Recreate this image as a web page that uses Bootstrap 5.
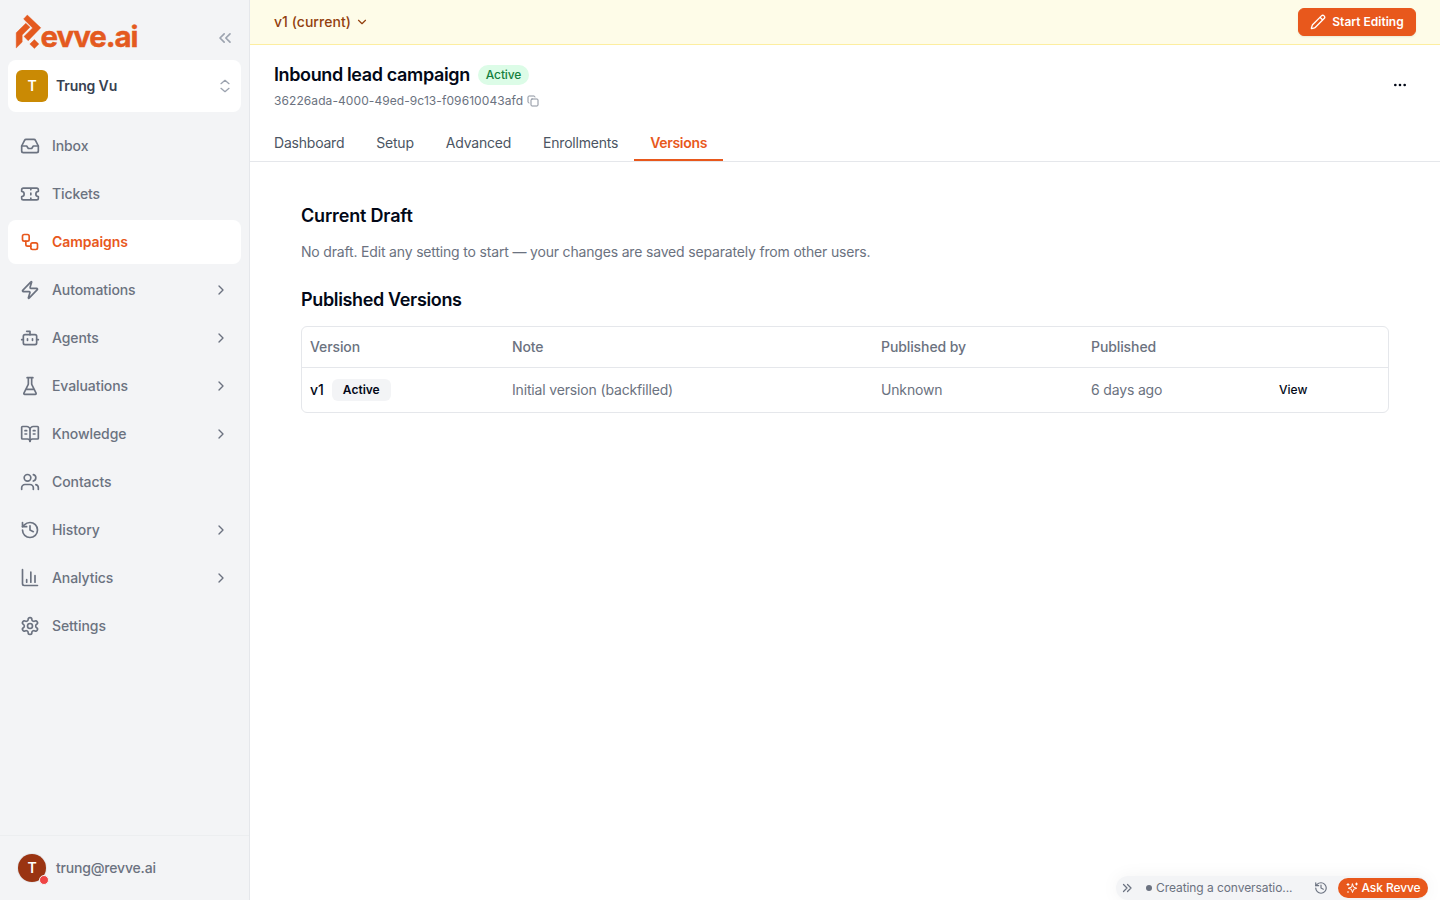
<!DOCTYPE html>
<html lang="en">
<head>
<meta charset="utf-8">
<meta name="viewport" content="width=device-width, initial-scale=1">
<title>Inbound lead campaign</title>
<link href="https://cdn.jsdelivr.net/npm/bootstrap@5.3.0/dist/css/bootstrap.min.css" rel="stylesheet">
<style>
body{font-family:Inter,"Liberation Sans",sans-serif;font-size:14px;line-height:20px;color:#020817;background:#fff;height:100vh;overflow:hidden}
svg{display:block;flex:none}
.ic{fill:none;stroke:currentColor;stroke-width:2;stroke-linecap:round;stroke-linejoin:round}
.side{width:250px;background:#f3f4f6;border-right:1px solid #e5e7eb;color:#6b7280}
.side-head{height:60px;padding:15px 14px 0 16px}
.brand{color:#e45a20;overflow:visible}
.brand path{stroke:currentColor;stroke-width:.4}
.collapse-btn{margin-top:13px;color:#9ca3af}
.team{height:52px;margin:0 8px;padding:0 8px;border-radius:8px;background:#fff;color:#374151;letter-spacing:-.14px}
.team-caret{color:#9ca3af}
.team-tile{width:32px;height:32px;border-radius:6px;background:#ca8a04;color:#fff}
.menu{padding:12px 8px 0;gap:4px}
.menu .nav-link{height:44px;padding:0 12px;border-radius:8px;color:#6b7280;font-weight:500;gap:12px;letter-spacing:-.09px}
.menu .nav-link.active{background:#fff;color:#e8581c;font-weight:600}
.side-foot{height:65px;border-top:1px solid #eceef0;padding:0 16px;gap:8px;letter-spacing:-.18px}
.mail,.version-pick{font-weight:500}
.version-pick{letter-spacing:.04px;gap:4px}
.avatar{width:32px;height:32px;padding:2px}
.avatar-face{width:28px;height:28px;background:#9a3412;color:#fff;box-shadow:0 0 0 1px #e5e7eb}
.status-dot{position:absolute;right:-1px;bottom:-1px;width:10px;height:10px;border:1px solid #f3f4f6;background:#ef4444}
.version-bar{height:45px;padding:0 24px;background:#fefce8;border-bottom:1px solid #fdeea0;color:#92400e}
.btn-edit{--bs-btn-color:#fff;--bs-btn-bg:#e8581c;--bs-btn-border-color:#e8581c;--bs-btn-hover-bg:#cf4a13;--bs-btn-hover-color:#fff;height:28px;width:118px;padding:0;font-size:12px;font-weight:600;border-radius:6px;gap:6px;box-shadow:0 1px 2px rgba(0,0,0,.08)}
.page-head{height:80px;padding:18px 24px 0}
.more-btn{margin-top:14px}
.page-title{font-size:18px;line-height:24px;letter-spacing:-.37px}
.pill-active{height:20px;padding:0 8px;background:#dcfce7;color:#15803d;font-size:12px;font-weight:500;line-height:20px;letter-spacing:-.13px}
.uuid{font-size:12px;line-height:16px;color:#6b7280;gap:4px;margin-top:6px;letter-spacing:.08px}
.soft{color:#8a919d}
.tabs{height:37px;border-bottom:1px solid #e5e7eb;padding-left:8px;letter-spacing:-.215px}
.tabs .nav-link{padding:8px 16px 6px;color:#4b5563;border-bottom:2px solid transparent;height:36px}
.tabs .nav-link.active{color:#e8581c;font-weight:600;border-color:#e8581c;letter-spacing:-.3px}
.content{padding:40px 51px 0}
.sect{font-size:18px;line-height:28px;font-weight:600;letter-spacing:-.35px;margin:0}
.sect.draft{letter-spacing:-.17px}
.muted{color:#6b7280;padding:12px 0 24px;letter-spacing:-.175px}
.frame{border:1px solid #e5e7eb;border-radius:6px;margin-top:12px}
.frame .table{--bs-table-bg:transparent;table-layout:fixed;margin:0}
.frame th,.frame td{padding:0 8px;vertical-align:middle;color:#6b7280;border-bottom:0}
.frame th{height:40px;font-weight:500;border-bottom:1px solid #e5e7eb;letter-spacing:-.1px}
.frame td{height:45px;letter-spacing:-.16px}
.frame td.ink{color:#020817;font-weight:500;letter-spacing:0}
.frame td.view-cell{font-size:12px}
.tag{height:22px;padding:0 11px;background:#f3f4f6;border-radius:6px;font-size:12px;font-weight:600;line-height:22px}
.dock{position:absolute;right:12px;bottom:0;width:312px;height:24px;padding-left:5px;background:#f3f4f6;border-radius:12px;color:#6b7280;font-size:12px;letter-spacing:-.07px;box-shadow:0 0 18px rgba(0,0,0,.05)}
.dock-more{stroke-width:2.5}
.dock-dot{width:6px;height:6px;background:#6b7280;margin:0 4px 0 13px}
.dock-history{margin:0 10px 0 auto}
.ask{height:20px;width:90px;background:#e8581c;color:#fff;font-weight:500;gap:4px;letter-spacing:-.1px}
</style>
</head>
<body class="d-flex">
<svg width="0" height="0" class="position-absolute"><defs>
<symbol id="right" viewBox="0 0 24 24"><path d="m9 18 6-6-6-6"/></symbol>
</defs></svg>

<aside class="side d-flex flex-column flex-shrink-0">
  <div class="side-head d-flex justify-content-between align-items-start">
    <svg class="brand" width="130" height="38" viewBox="0 0 130 38" fill="currentColor">
      <path d="M11.3 0 24.8 12.8 12.2 25.8 8 21.4 16.6 12.9 7.6 4z"/>
      <path d="M.2 33V17.8L9.8 8.2 14 12.2 6.2 20v7.1z"/>
      <path d="M13.8 29.1 18.4 24.6 22.9 29.1 18.4 33.5z"/>
      <text x="24.6" y="31.8" font-size="29.5" font-weight="700" stroke="currentColor" stroke-width=".4" textLength="98" lengthAdjust="spacing">evve.ai</text>
    </svg>
    <svg class="ic collapse-btn" width="20" height="20" viewBox="0 0 24 24"><path d="m11 17-5-5 5-5M18 17l-5-5 5-5"/></svg>
  </div>
  <div class="team d-flex align-items-center">
    <span class="team-tile d-flex align-items-center justify-content-center fw-semibold me-2">T</span>
    <span class="fw-semibold flex-grow-1">Trung Vu</span>
    <svg class="ic team-caret" width="16" height="16" viewBox="0 0 24 24"><path d="m6 15.500 6 5 6-5M6 8.500l6-5 6 5"/></svg>
  </div>
  <nav class="menu nav flex-column flex-nowrap flex-grow-1">
    <a href="#" class="nav-link d-flex align-items-center"><svg class="ic" width="20" height="20" viewBox="0 0 24 24"><path d="M22 12h-6l-2 3h-4l-2-3H2"/><path d="M5.45 5.11 2 12v6a2 2 0 0 0 2 2h16a2 2 0 0 0 2-2v-6l-3.45-6.89A2 2 0 0 0 16.76 4H7.24a2 2 0 0 0-1.79 1.11z"/></svg>Inbox</a>
    <a href="#" class="nav-link d-flex align-items-center"><svg class="ic" width="20" height="20" viewBox="0 0 24 24"><path d="M2 9a3 3 0 0 1 0 6v2a2 2 0 0 0 2 2h16a2 2 0 0 0 2-2v-2a3 3 0 0 1 0-6V7a2 2 0 0 0-2-2H4a2 2 0 0 0-2 2ZM13 5v2M13 17v2M13 11v2"/></svg>Tickets</a>
    <a href="#" class="nav-link active d-flex align-items-center"><svg class="ic" width="20" height="20" viewBox="0 0 24 24"><rect width="8" height="8" x="3" y="3" rx="2"/><path d="M7 11v4a2 2 0 0 0 2 2h4"/><rect width="8" height="8" x="13" y="13" rx="2"/></svg>Campaigns</a>
    <a href="#" class="nav-link d-flex align-items-center"><svg class="ic" width="20" height="20" viewBox="0 0 24 24"><path d="M4 14a1 1 0 0 1-.78-1.63l9.9-10.2a.5.5 0 0 1 .86.46l-1.92 6.02A1 1 0 0 0 13 10h7a1 1 0 0 1 .78 1.63l-9.9 10.2a.5.5 0 0 1-.86-.46l1.92-6.02A1 1 0 0 0 11 14z"/></svg>Automations<svg class="ic ms-auto" width="16" height="16"><use href="#right"/></svg></a>
    <a href="#" class="nav-link d-flex align-items-center"><svg class="ic" width="20" height="20" viewBox="0 0 24 24"><path d="M12 8V4H8"/><rect width="16" height="12" x="4" y="8" rx="2"/><path d="M2 14h2M20 14h2M15 13v2M9 13v2"/></svg>Agents<svg class="ic ms-auto" width="16" height="16"><use href="#right"/></svg></a>
    <a href="#" class="nav-link d-flex align-items-center"><svg class="ic" width="20" height="20" viewBox="0 0 24 24"><path d="M10 2v7.53a2 2 0 0 1-.21.9L4.72 20.55a1 1 0 0 0 .9 1.45h12.76a1 1 0 0 0 .9-1.45l-5.07-10.12a2 2 0 0 1-.21-.9V2M8.5 2h7M7 16h10"/></svg>Evaluations<svg class="ic ms-auto" width="16" height="16"><use href="#right"/></svg></a>
    <a href="#" class="nav-link d-flex align-items-center"><svg class="ic" width="20" height="20" viewBox="0 0 24 24"><path d="M12 7v14M16 12h2M16 8h2M6 12h2M6 8h2"/><path d="M3 18a1 1 0 0 1-1-1V4a1 1 0 0 1 1-1h5a4 4 0 0 1 4 4 4 4 0 0 1 4-4h5a1 1 0 0 1 1 1v13a1 1 0 0 1-1 1h-6a3 3 0 0 0-3 3 3 3 0 0 0-3-3z"/></svg>Knowledge<svg class="ic ms-auto" width="16" height="16"><use href="#right"/></svg></a>
    <a href="#" class="nav-link d-flex align-items-center"><svg class="ic" width="20" height="20" viewBox="0 0 24 24"><path d="M16 21v-2a4 4 0 0 0-4-4H6a4 4 0 0 0-4 4v2"/><circle cx="9" cy="7" r="4"/><path d="M22 21v-2a4 4 0 0 0-3-3.87M16 3.13a4 4 0 0 1 0 7.75"/></svg>Contacts</a>
    <a href="#" class="nav-link d-flex align-items-center"><svg class="ic" width="20" height="20" viewBox="0 0 24 24"><path d="M3 12a9 9 0 1 0 9-9 9.75 9.75 0 0 0-6.74 2.74L3 8"/><path d="M3 3v5h5M12 7v5l4 2"/></svg>History<svg class="ic ms-auto" width="16" height="16"><use href="#right"/></svg></a>
    <a href="#" class="nav-link d-flex align-items-center"><svg class="ic" width="20" height="20" viewBox="0 0 24 24"><path d="M3 2v17a2 2 0 0 0 2 2h16M18 17V9M13 17V5M8 17v-3"/></svg>Analytics<svg class="ic ms-auto" width="16" height="16"><use href="#right"/></svg></a>
    <a href="#" class="nav-link d-flex align-items-center"><svg class="ic" width="20" height="20" viewBox="0 0 24 24"><path d="M12.22 2h-.44a2 2 0 0 0-2 2v.18a2 2 0 0 1-1 1.73l-.43.25a2 2 0 0 1-2 0l-.15-.08a2 2 0 0 0-2.73.73l-.22.38a2 2 0 0 0 .73 2.73l.15.1a2 2 0 0 1 1 1.72v.51a2 2 0 0 1-1 1.74l-.15.09a2 2 0 0 0-.73 2.73l.22.38a2 2 0 0 0 2.73.73l.15-.08a2 2 0 0 1 2 0l.43.25a2 2 0 0 1 1 1.73V20a2 2 0 0 0 2 2h.44a2 2 0 0 0 2-2v-.18a2 2 0 0 1 1-1.73l.43-.25a2 2 0 0 1 2 0l.15.08a2 2 0 0 0 2.73-.73l.22-.39a2 2 0 0 0-.73-2.73l-.15-.08a2 2 0 0 1-1-1.74v-.5a2 2 0 0 1 1-1.74l.15-.09a2 2 0 0 0 .73-2.73l-.22-.38a2 2 0 0 0-2.73-.73l-.15.08a2 2 0 0 1-2 0l-.43-.25a2 2 0 0 1-1-1.73V4a2 2 0 0 0-2-2z"/><circle cx="12" cy="12" r="3"/></svg>Settings</a>
  </nav>
  <div class="side-foot d-flex align-items-center">
    <div class="avatar position-relative"><span class="avatar-face rounded-circle d-flex align-items-center justify-content-center fw-semibold">T</span><span class="status-dot rounded-circle"></span></div>
    <span class="mail">trung@revve.ai</span>
  </div>
</aside>

<main class="flex-grow-1 d-flex flex-column position-relative">
  <div class="version-bar d-flex align-items-center justify-content-between">
    <div class="version-pick d-flex align-items-center">v1 (current)<svg class="ic" width="14" height="14" viewBox="0 0 24 24"><path d="m6 9 6 6 6-6"/></svg></div>
    <button class="btn btn-edit d-flex align-items-center justify-content-center"><svg class="ic" width="16" height="16" viewBox="0 0 24 24"><path d="M21.17 6.81a1 1 0 0 0-3.99-3.99L3.84 16.17a2 2 0 0 0-.5.83l-1.32 4.35a.5.5 0 0 0 .62.62l4.35-1.32a2 2 0 0 0 .83-.5zM15 5l4 4"/></svg>Start Editing</button>
  </div>
  <header class="page-head d-flex justify-content-between">
    <div>
      <div class="d-flex align-items-center gap-2"><h1 class="page-title fw-semibold m-0">Inbound lead campaign</h1><span class="pill-active rounded-pill">Active</span></div>
      <div class="uuid d-flex align-items-center">36226ada-4000-49ed-9c13-f09610043afd<svg class="ic soft" width="12" height="12" viewBox="0 0 24 24"><rect width="14" height="14" x="8" y="8" rx="2"/><path d="M4 16c-1.1 0-2-.9-2-2V4c0-1.1.9-2 2-2h10c1.1 0 2 .9 2 2"/></svg></div>
    </div>
    <svg class="ic more-btn me-2" width="16" height="16" viewBox="0 0 24 24"><circle cx="12" cy="12" r="1"/><circle cx="19" cy="12" r="1"/><circle cx="5" cy="12" r="1"/></svg>
  </header>
  <nav class="tabs nav flex-nowrap">
    <a href="#" class="nav-link">Dashboard</a><a href="#" class="nav-link">Setup</a><a href="#" class="nav-link">Advanced</a><a href="#" class="nav-link">Enrollments</a><a href="#" class="nav-link active">Versions</a>
  </nav>
  <section class="content">
    <h2 class="sect draft">Current Draft</h2>
    <p class="muted m-0">No draft. Edit any setting to start — your changes are saved separately from other users.</p>
    <h2 class="sect">Published Versions</h2>
    <div class="frame">
      <table class="table">
        <colgroup><col style="width:202px"><col style="width:369px"><col style="width:210px"><col style="width:188px"><col></colgroup>
        <thead><tr><th>Version</th><th>Note</th><th>Published by</th><th>Published</th><th></th></tr></thead>
        <tbody><tr><td class="ink"><div class="d-flex align-items-center gap-2">v1<span class="tag">Active</span></div></td><td>Initial version (backfilled)</td><td>Unknown</td><td>6 days ago</td><td class="ink view-cell">View</td></tr></tbody>
      </table>
    </div>
  </section>
  <div class="dock d-flex align-items-center">
    <svg class="ic dock-more" width="12" height="12" viewBox="0 0 24 24"><path d="m5 19 7-7-7-7M13 19l7-7-7-7"/></svg>
    <span class="dock-dot rounded-circle"></span><span>Creating a conversatio...</span>
    <svg class="ic dock-history" width="14" height="14" viewBox="0 0 24 24"><path d="M3 12a9 9 0 1 0 9-9 9.75 9.75 0 0 0-6.74 2.74L3 8"/><path d="M3 3v5h5M12 7v5l4 2"/></svg>
    <span class="ask rounded-pill d-flex align-items-center justify-content-center"><svg class="ic" width="12" height="12" viewBox="0 0 24 24"><path d="m13 4 2.200 6.300L21.500 12.500l-6.300 2.200L13 21l-2.200-6.300-6.300-2.200 6.300-2.200zM4 3v4M2 5h4M21 2v4M19 4h4M4 19v2"/></svg>Ask Revve</span>
  </div>
</main>
<script src="https://cdn.jsdelivr.net/npm/bootstrap@5.3.0/dist/js/bootstrap.bundle.min.js"></script>
</body>
</html>
